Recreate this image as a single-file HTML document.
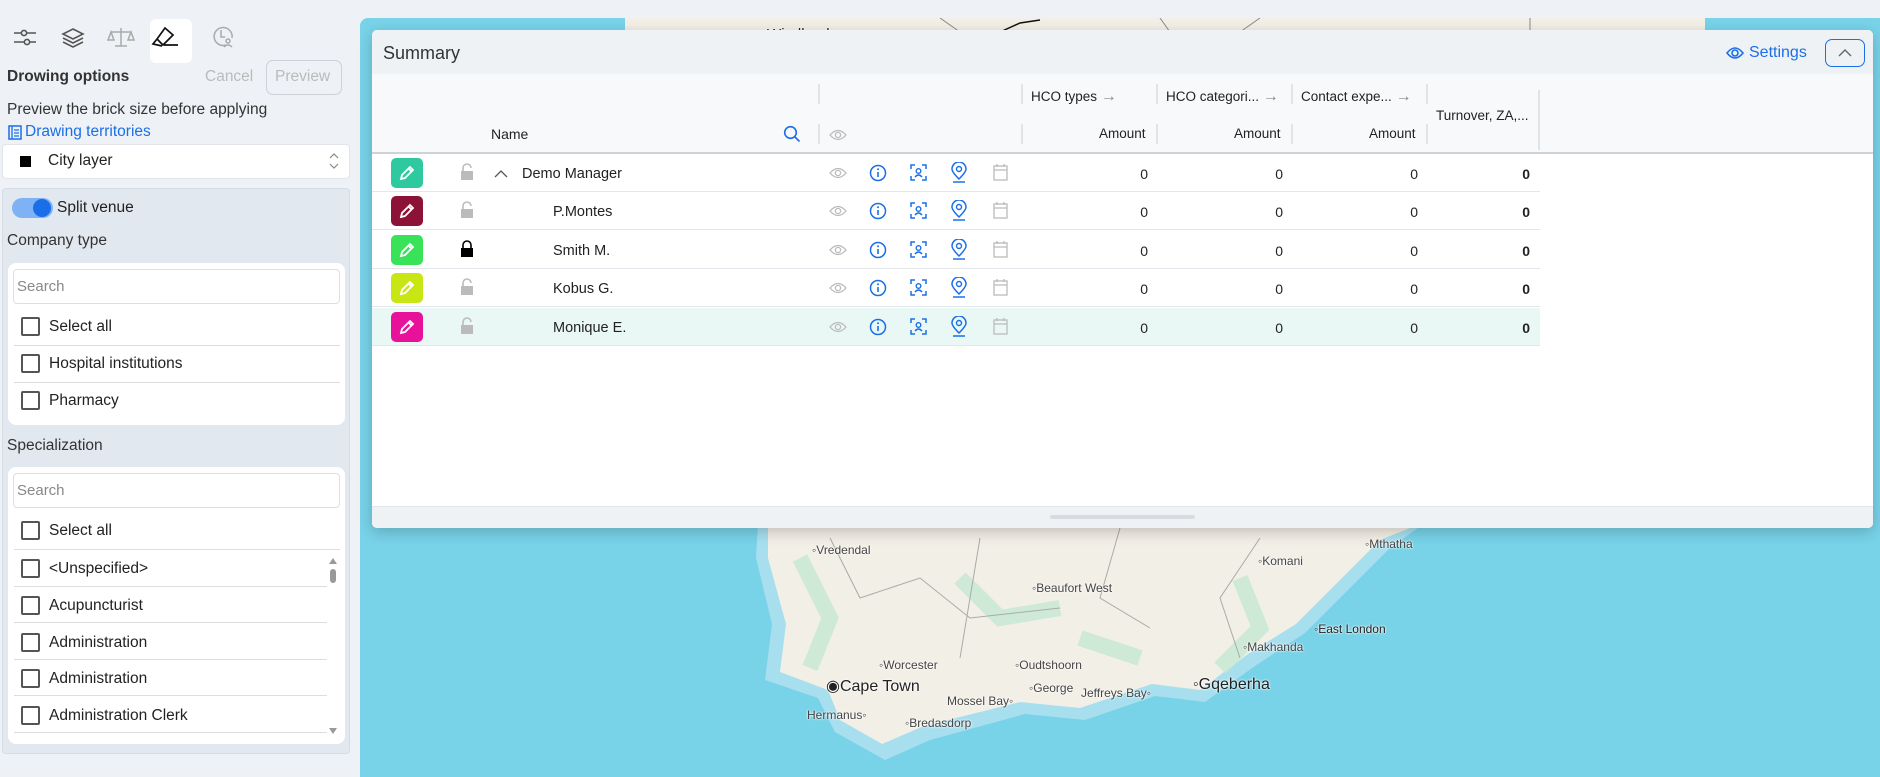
<!DOCTYPE html>
<html><head><meta charset="utf-8">
<style>
*{box-sizing:border-box;margin:0;padding:0}
body{width:1880px;height:777px;overflow:hidden;background:#eef1f5;font-family:"Liberation Sans",sans-serif;color:#222;position:relative}
.a{position:absolute}
.t{position:absolute;white-space:nowrap}
.cb{position:absolute;left:21px;width:19px;height:19px;border:2px solid #555;border-radius:2px;background:#fff}
.sep{position:absolute;left:14px;height:1px;background:#ddd}
.lbl{position:absolute;left:49px;font-size:15.5px;color:#222}
.row{position:absolute;left:0;width:1168px;height:38px;border-bottom:1.5px solid #e3e6ea}
.pen{position:absolute;left:19px;top:4px;width:32px;height:30px;border-radius:5px}
.pen svg{position:absolute;left:8px;top:7px}
.num{position:absolute;font-size:14px;top:12px;text-align:right;width:40px}
.mlab{position:absolute;font-size:12px;color:#444;text-shadow:0 0 2px #fff,0 0 2px #fff}
</style></head><body>

<!-- MAP -->
<div class="a" style="left:360px;top:18px;width:1520px;height:759px;background:#78d2e8;border-radius:8px 0 0 0;overflow:hidden">
  <svg class="a" style="left:0;top:0" width="1520" height="759">
    <rect x="265" y="0" width="1080" height="14" fill="#f3efe6"/>
    <path d="M580 0 l20 14 M800 0 l10 14 M900 0 l-20 14 M1170 0 l0 14" stroke="#888" stroke-width="1" fill="none"/>
    <path d="M640 14 L660 5 L680 2" stroke="#111" stroke-width="1.5" fill="none"/>
    <path d="M398 505 L1065 505 L1030 530 L980 580 L945 615 L895 648 L845 684 L795 678 L725 702 L665 696 L570 722 L525 742 L475 714 L458 680 L405 662 L412 606 L396 540 Z" fill="#a7dfef"/>
    <path d="M408 510 L1050 510 L1020 522 L972 570 L936 606 L888 636 L840 672 L792 666 L720 690 L660 684 L564 708 L522 726 L480 702 L468 672 L420 654 L426 606 L408 540 Z" fill="#f2efe6"/>
    <path d="M440 540 L470 600 L450 650 M600 560 L640 600 L700 590 M880 560 L900 610 L860 650 M720 620 L780 640" stroke="#c4e8d3" stroke-width="16" fill="none" opacity=".8"/>
    <path d="M470 520 L500 580 L560 560 L610 600 L700 590 M760 510 L740 580 L790 610 M900 520 L860 580 L880 640 M620 520 L600 640" stroke="#aaa" stroke-width="1" fill="none"/>
  </svg>
  <div class="mlab" style="left:295px;top:12px;font-size:10px">oSwakopmund</div>
  <div class="mlab" style="left:398px;top:8px;font-size:15px;color:#222">●Windhoek</div>
  <div class="mlab" style="left:452px;top:525px">◦Vredendal</div>
  <div class="mlab" style="left:1005px;top:519px">◦Mthatha</div>
  <div class="mlab" style="left:898px;top:536px">◦Komani</div>
  <div class="mlab" style="left:672px;top:563px">◦Beaufort West</div>
  <div class="mlab" style="left:954px;top:604px;color:#222">◦East London</div>
  <div class="mlab" style="left:883px;top:622px">◦Makhanda</div>
  <div class="mlab" style="left:519px;top:640px">◦Worcester</div>
  <div class="mlab" style="left:655px;top:640px">◦Oudtshoorn</div>
  <div class="mlab" style="left:466px;top:658px;font-size:16px;color:#222">◉Cape Town</div>
  <div class="mlab" style="left:669px;top:663px">◦George</div>
  <div class="mlab" style="left:721px;top:668px">Jeffreys Bay◦</div>
  <div class="mlab" style="left:833px;top:658px;font-size:16px;color:#222">◦Gqeberha</div>
  <div class="mlab" style="left:587px;top:676px">Mossel Bay◦</div>
  <div class="mlab" style="left:447px;top:690px">Hermanus◦</div>
  <div class="mlab" style="left:545px;top:698px">◦Bredasdorp</div>
</div>

<!-- SUMMARY PANEL -->
<div class="a" style="left:372px;top:30px;width:1501px;height:498px;background:#fff;border-radius:5px;box-shadow:0 4px 14px rgba(0,0,0,.2);overflow:hidden">
  <div class="a" style="left:0;top:0;width:1501px;height:44px;background:#eff2f5"></div>
  <div class="t" style="left:11px;top:13px;font-size:18px;color:#333">Summary</div>
  <svg class="a" style="left:1354px;top:16px" width="18" height="14" viewBox="0 0 18 14"><path d="M1 7 Q9 -3 17 7 Q9 17 1 7Z" fill="none" stroke="#1a6fe8" stroke-width="1.6"/><circle cx="9" cy="7" r="3" fill="none" stroke="#1a6fe8" stroke-width="1.6"/></svg>
  <div class="t" style="left:1377px;top:14px;font-size:16px;color:#1a6fe8">Settings</div>
  <div class="a" style="left:1453px;top:9px;width:40px;height:28px;border:1.5px solid #1a6fe8;border-radius:7px"><svg class="a" style="left:12px;top:8px" width="14" height="9"><path d="M1 8 L7 2 L13 8" fill="none" stroke="#666" stroke-width="1.4"/></svg></div>

  <div class="a" style="left:0;top:44px;width:1501px;height:80px;background:#f8f9fb;border-bottom:2px solid #cfd3d8"></div>
  <div class="a" style="left:446px;top:54px;width:2px;height:20px;background:#e0e3e7"></div>
  <div class="a" style="left:446px;top:94px;width:2px;height:20px;background:#e0e3e7"></div>
  <div class="t" style="left:119px;top:96px;font-size:14px">Name</div>
  <svg class="a" style="left:411px;top:95px" width="18" height="18"><circle cx="7.5" cy="7.5" r="5.8" fill="none" stroke="#1a6fe8" stroke-width="1.6"/><path d="M12 12 L16.5 16.5" stroke="#1a6fe8" stroke-width="1.6"/></svg>
  <svg class="a" style="left:457px;top:99px" width="18" height="12"><path d="M1 6 Q9 -3 17 6 Q9 15 1 6Z" fill="none" stroke="#bbb" stroke-width="1.3"/><circle cx="9" cy="6" r="2.6" fill="none" stroke="#bbb" stroke-width="1.3"/></svg>
  <div class="a" style="left:649px;top:54px;width:2px;height:20px;background:#e0e3e7"></div>
  <div class="a" style="left:649px;top:94px;width:2px;height:20px;background:#e0e3e7"></div>
  <div class="a" style="left:784px;top:54px;width:2px;height:20px;background:#e0e3e7"></div>
  <div class="a" style="left:784px;top:94px;width:2px;height:20px;background:#e0e3e7"></div>
  <div class="a" style="left:919px;top:54px;width:2px;height:20px;background:#e0e3e7"></div>
  <div class="a" style="left:919px;top:94px;width:2px;height:20px;background:#e0e3e7"></div>
  <div class="a" style="left:1054px;top:54px;width:2px;height:20px;background:#e0e3e7"></div>
  <div class="a" style="left:1054px;top:94px;width:2px;height:20px;background:#e0e3e7"></div>
  <div class="a" style="left:1166px;top:60px;width:2px;height:60px;background:#e0e3e7"></div>
  <div class="t" style="left:659px;top:58px;font-size:13.5px">HCO types <span style="color:#888;font-size:16px">→</span></div>
  <div class="t" style="left:794px;top:58px;font-size:13.5px">HCO categori... <span style="color:#888;font-size:16px">→</span></div>
  <div class="t" style="left:929px;top:58px;font-size:13.5px">Contact expe... <span style="color:#888;font-size:16px">→</span></div>
  <div class="t" style="left:1064px;top:78px;font-size:13.5px">Turnover, ZA,...</div>
  <div class="t" style="left:727px;top:96px;font-size:13.5px">Amount</div>
  <div class="t" style="left:862px;top:96px;font-size:13.5px">Amount</div>
  <div class="t" style="left:997px;top:96px;font-size:13.5px">Amount</div>

  <div id="rows"></div>

  <div class="a" style="left:0;top:476px;width:1501px;height:22px;background:#eff2f5;border-top:1px solid #e3e6ea"></div>
  <div class="a" style="left:678px;top:485px;width:145px;height:4px;background:#d8dbdf;border-radius:2px"></div>
</div>

<!-- SIDEBAR -->
<div class="a" style="left:150px;top:19px;width:42px;height:44px;background:#fff;border-radius:6px"></div>
<svg class="a" style="left:12px;top:24px" width="240" height="26" viewBox="0 0 240 26">
  <g fill="none" stroke="#555" stroke-width="1.6">
    <path d="M2 9 H9 M15 9 H24 M2 18 H12 M18 18 H24"/><circle cx="12" cy="9" r="2.6"/><circle cx="15" cy="18" r="2.6"/>
    <path d="M61 5 L71 10 L61 15 L51 10 Z M51 14 L61 19 L71 14 M51 18 L61 23 L71 18"/>
  </g>
  <g fill="none" stroke="#aaa" stroke-width="1.5">
    <path d="M109 4 V22 M103 22 H115 M99 8 H119 M99 8 L96 16 H102 Z M119 8 L116 16 H122 Z"/>
  </g>
  <g fill="none" stroke="#111" stroke-width="1.7">
    <path d="M153 4 L145 15 L151 21 L161 11 Z M145 15 L141 20 L150 22 M152 21 H166"/>
  </g>
  <g fill="none" stroke="#aaa" stroke-width="1.5">
    <path d="M214 21 A9 9 0 1 1 220 14"/><path d="M209 6 V13 L213 13"/><circle cx="216" cy="17" r="2"/><path d="M212 23 Q216 19 220 23"/>
  </g>
</svg>
<div class="t" style="left:7px;top:68px;font-size:15.5px;font-weight:bold;color:#333">Drowing options</div>
<div class="t" style="left:205px;top:68px;font-size:15.5px;color:#bbb">Cancel</div>
<div class="a" style="left:266px;top:60px;width:76px;height:35px;border:1.5px solid #cdd2d8;border-radius:7px"></div>
<div class="t" style="left:275px;top:68px;font-size:15.5px;color:#bbb">Preview</div>
<div class="t" style="left:7px;top:101px;font-size:15.5px;color:#333">Preview the brick size before applying</div>
<svg class="a" style="left:8px;top:125px" width="14" height="15"><rect x="1" y="1" width="12" height="13" fill="none" stroke="#1a6fe8" stroke-width="1.5"/><path d="M4 1 V14 M6 5 H11 M6 8 H11 M6 11 H11" stroke="#1a6fe8" stroke-width="1.3"/></svg>
<div class="t" style="left:25px;top:123px;font-size:15.5px;color:#1a6fe8">Drawing territories</div>
<div class="a" style="left:2px;top:144px;width:348px;height:35px;background:#fff;border:1px solid #e1e4e8;border-radius:4px"></div>
<div class="a" style="left:20px;top:156px;width:11px;height:11px;background:#000"></div>
<div class="t" style="left:48px;top:152px;font-size:15.5px">City layer</div>
<svg class="a" style="left:329px;top:152px" width="10" height="18"><path d="M1 6 L5 2 L9 6 M1 12 L5 16 L9 12" fill="none" stroke="#888" stroke-width="1.2"/></svg>

<div class="a" style="left:2px;top:188px;width:348px;height:566px;background:#e2e8ef;border:1px solid #d6dce4;border-radius:4px"></div>
<div class="a" style="left:12px;top:198px;width:41px;height:20px;border-radius:10px;background:#7fb2f5"></div>
<div class="a" style="left:33px;top:199px;width:18px;height:18px;border-radius:9px;background:#1a6fe8"></div>
<div class="t" style="left:57px;top:199px;font-size:15.5px">Split venue</div>
<div class="t" style="left:7px;top:232px;font-size:15.5px;color:#333">Company type</div>

<div class="a" style="left:8px;top:263px;width:337px;height:162px;background:#fff;border-radius:8px"></div>
<div class="a" style="left:13px;top:269px;width:327px;height:35px;border:1px solid #dcdfe3;border-radius:4px"></div>
<div class="t" style="left:17px;top:278px;font-size:15px;color:#888">Search</div>
<div class="cb" style="top:317px"></div><div class="lbl" style="top:318px">Select all</div>
<div class="sep" style="top:345px;width:326px"></div>
<div class="cb" style="top:354px"></div><div class="lbl" style="top:355px">Hospital institutions</div>
<div class="sep" style="top:382px;width:326px"></div>
<div class="cb" style="top:391px"></div><div class="lbl" style="top:392px">Pharmacy</div>

<div class="t" style="left:7px;top:437px;font-size:15.5px;color:#333">Specialization</div>
<div class="a" style="left:8px;top:467px;width:337px;height:277px;background:#fff;border-radius:8px"></div>
<div class="a" style="left:13px;top:473px;width:327px;height:35px;border:1px solid #dcdfe3;border-radius:4px"></div>
<div class="t" style="left:17px;top:482px;font-size:15px;color:#888">Search</div>
<div class="cb" style="top:521px"></div><div class="lbl" style="top:522px">Select all</div>
<div class="sep" style="top:549px;width:326px"></div>
<div class="cb" style="top:559px"></div><div class="lbl" style="top:560px">&lt;Unspecified&gt;</div>
<div class="sep" style="top:586px;width:313px"></div>
<div class="cb" style="top:596px"></div><div class="lbl" style="top:597px">Acupuncturist</div>
<div class="sep" style="top:622px;width:313px"></div>
<div class="cb" style="top:633px"></div><div class="lbl" style="top:634px">Administration</div>
<div class="sep" style="top:659px;width:313px"></div>
<div class="cb" style="top:669px"></div><div class="lbl" style="top:670px">Administration</div>
<div class="sep" style="top:695px;width:313px"></div>
<div class="cb" style="top:706px"></div><div class="lbl" style="top:707px">Administration Clerk</div>
<div class="sep" style="top:732px;width:313px"></div>
<div class="a" style="left:329px;top:558px;width:0;height:0;border-left:4px solid transparent;border-right:4px solid transparent;border-bottom:6px solid #999"></div>
<div class="a" style="left:330px;top:569px;width:6px;height:14px;background:#999;border-radius:3px"></div>
<div class="a" style="left:329px;top:728px;width:0;height:0;border-left:4px solid transparent;border-right:4px solid transparent;border-top:6px solid #999"></div>

<script>
var rows=[["#2fc9a0","Demo Manager",1,0],["#8c1238","P.Montes",0,0],["#38e35a","Smith M.",0,1],["#c8e614","Kobus G.",0,0],["#e8129a","Monique E.",0,0]];
var h="";
rows.forEach(function(r,i){
 var top=124+i*38.4, bg=i==4?"#eaf8f5":"#fff";
 h+='<div class="row" style="top:'+top+'px;background:'+bg+'">';
 h+='<div class="pen" style="background:'+r[0]+'"><svg width="16" height="16" viewBox="0 0 16 16"><path d="M2 14 L3 10 L11 2 L14 5 L6 13 Z M9.5 3.5 L12.5 6.5" fill="none" stroke="#fff" stroke-width="1.8"/></svg></div>';
 var lc=r[3]?"#000":"#bbb";
 h+='<svg class="a" style="left:88px;top:9px" width="14" height="18"><path d="M3 8 V5 A4 4 0 0 1 11 5'+(r[3]?' V8':'')+'" fill="none" stroke="'+lc+'" stroke-width="1.6"/><rect x="1" y="8" width="12" height="9" fill="'+lc+'"/></svg>';
 if(r[2]) h+='<svg class="a" style="left:122px;top:15px" width="14" height="9"><path d="M1 8 L7 2 L13 8" fill="none" stroke="#555" stroke-width="1.3"/></svg>';
 h+='<div class="t" style="left:'+(r[2]?150:181)+'px;top:12px;font-size:14.5px;color:#222">'+r[1]+'</div>';
 h+='<svg class="a" style="left:457px;top:13px" width="18" height="12"><path d="M1 6 Q9 -3 17 6 Q9 15 1 6Z" fill="none" stroke="#bbb" stroke-width="1.3"/><circle cx="9" cy="6" r="2.6" fill="none" stroke="#bbb" stroke-width="1.3"/></svg>';
 h+='<svg class="a" style="left:497px;top:10px" width="18" height="18"><circle cx="9" cy="9" r="7.5" fill="none" stroke="#1a6fe8" stroke-width="1.5"/><path d="M9 8 V13" stroke="#1a6fe8" stroke-width="1.6"/><circle cx="9" cy="5.3" r="1" fill="#1a6fe8"/></svg>';
 h+='<svg class="a" style="left:538px;top:10px" width="17" height="17"><path d="M1 5 V1 H5 M12 1 H16 V5 M16 12 V16 H12 M5 16 H1 V12" fill="none" stroke="#1a6fe8" stroke-width="1.5"/><circle cx="8.5" cy="7" r="2.3" fill="none" stroke="#1a6fe8" stroke-width="1.4"/><path d="M5 13 Q8.5 9 12 13" fill="none" stroke="#1a6fe8" stroke-width="1.4"/></svg>';
 h+='<svg class="a" style="left:579px;top:8px" width="16" height="21"><path d="M8 17 Q1 10 1 7 A7 7 0 0 1 15 7 Q15 10 8 17Z" fill="none" stroke="#1a6fe8" stroke-width="1.5"/><circle cx="8" cy="7" r="2.5" fill="none" stroke="#1a6fe8" stroke-width="1.4"/><path d="M2 20 H14" stroke="#1a6fe8" stroke-width="1.5"/></svg>';
 h+='<svg class="a" style="left:621px;top:9px" width="15" height="18"><rect x="1" y="3" width="13" height="14" fill="none" stroke="#bbb" stroke-width="1.3"/><path d="M1 7 H14 M4 1 V4 M11 1 V4" stroke="#bbb" stroke-width="1.3"/></svg>';
 [776,911,1046].forEach(function(x){h+='<div class="num" style="left:'+(x-40)+'px">0</div>';});
 h+='<div class="num" style="left:1118px;font-weight:bold">0</div>';
 h+='</div>';
});
document.getElementById("rows").innerHTML=h;
</script>
</body></html>
